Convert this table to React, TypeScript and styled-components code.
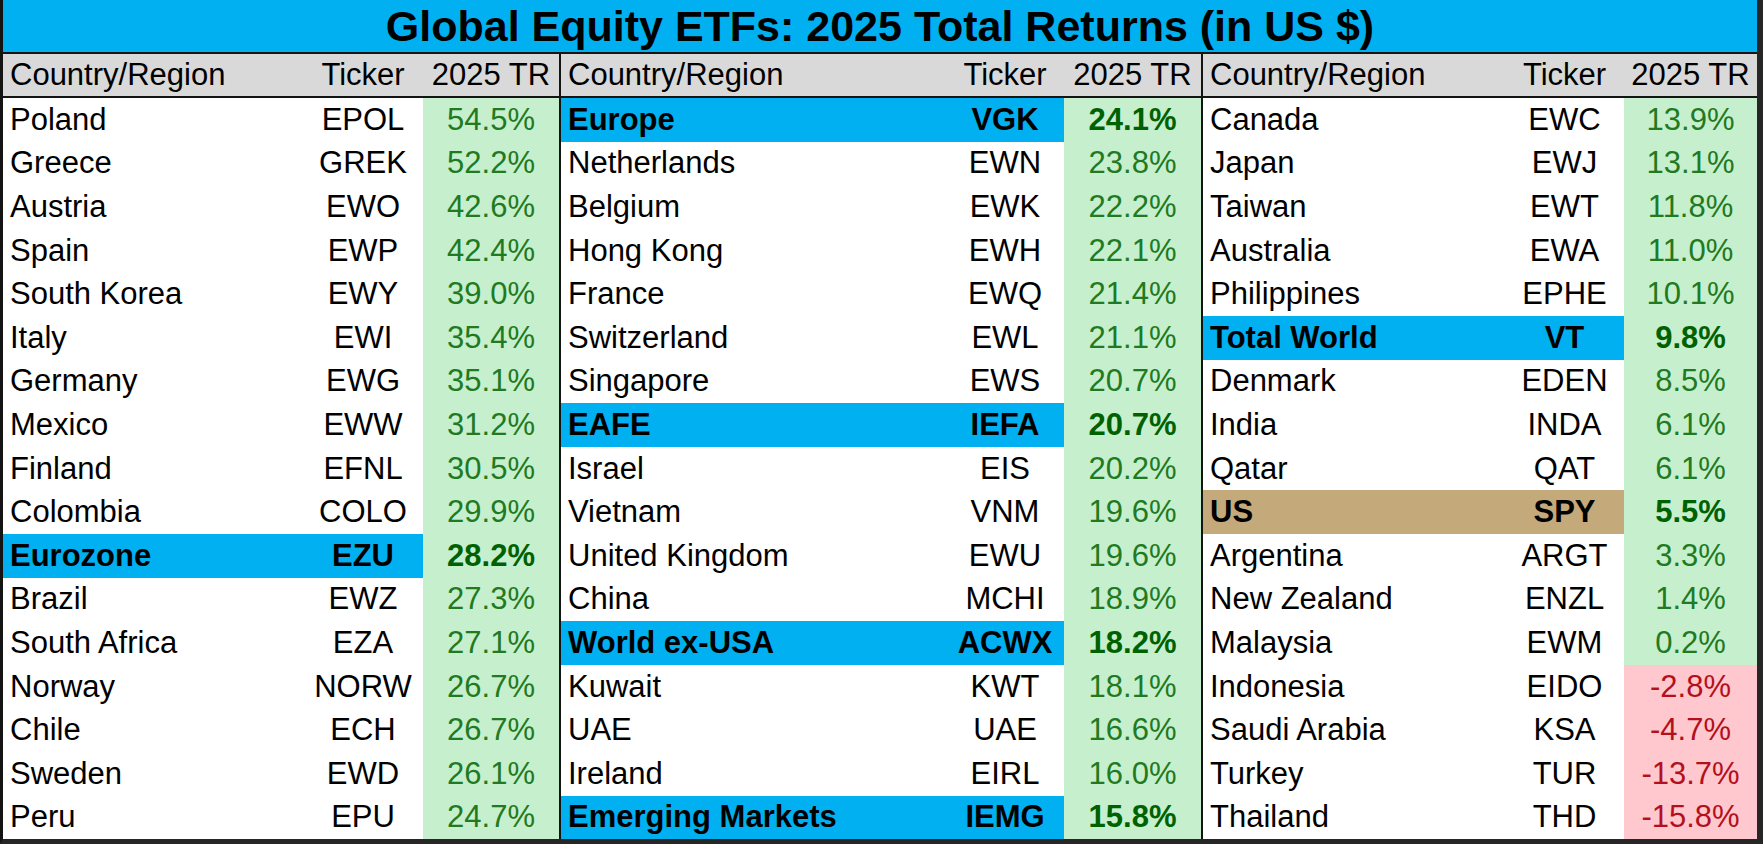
import React from "react"
import styled, { createGlobalStyle } from "styled-components"

type Kind = "plain" | "blue" | "tan"

type EtfRow = {
  name: string
  ticker: string
  tr: number
  kind?: Kind
}

type SectionDef = {
  cols: string
  width: number
  rows: EtfRow[]
}

const GlobalStyle = createGlobalStyle`
  html, body {
    margin: 0;
    padding: 0;
    background: #ffffff;
  }
`

const Sheet = styled.div`
  width: 1763px;
  height: 844px;
  box-sizing: border-box;
  border-left: 3px solid #141414;
  border-right: 6px solid #262626;
  border-bottom: 5px solid #262626;
  display: flex;
  flex-direction: column;
  font-family: "Liberation Sans", Arial, sans-serif;
  color: #000;
  overflow: hidden;
`

const TitleBar = styled.div`
  height: 52px;
  flex: none;
  border-bottom: 2px solid #141414;
  background: #00b0f0;
  display: flex;
  align-items: center;
  justify-content: center;
  font-size: 43px;
  font-weight: 700;
  white-space: nowrap;
`

const Columns = styled.div`
  flex: 1;
  display: flex;
  min-height: 0;
`

const Section = styled.div<{ $width: number; $first?: boolean }>`
  width: ${(p) => p.$width}px;
  flex: none;
  box-sizing: border-box;
  border-left: ${(p) => (p.$first ? "none" : "2px solid #141414")};
  display: flex;
  flex-direction: column;
`

const HeaderRow = styled.div<{ $cols: string }>`
  display: grid;
  grid-template-columns: ${(p) => p.$cols};
  height: 42px;
  flex: none;
  border-bottom: 2px solid #141414;
  background: #d9d9d9;
  font-size: 31px;
  align-items: center;
  white-space: nowrap;
`

const Row = styled.div<{ $cols: string }>`
  display: grid;
  grid-template-columns: ${(p) => p.$cols};
  flex: 1;
  font-size: 31px;
  white-space: nowrap;
`

const bandColor = (kind?: Kind) =>
  kind === "blue" ? "#00b0f0" : kind === "tan" ? "#c4a97b" : "transparent"

const NameCell = styled.div<{ $kind?: Kind }>`
  display: flex;
  align-items: center;
  padding-left: 7px;
  background: ${(p) => bandColor(p.$kind)};
  font-weight: ${(p) => (p.$kind && p.$kind !== "plain" ? 700 : 400)};
  overflow: hidden;
`

const TickerCell = styled.div<{ $kind?: Kind }>`
  display: flex;
  align-items: center;
  justify-content: center;
  background: ${(p) => bandColor(p.$kind)};
  font-weight: ${(p) => (p.$kind && p.$kind !== "plain" ? 700 : 400)};
`

const ReturnCell = styled.div<{ $neg: boolean; $bold?: boolean }>`
  display: flex;
  align-items: center;
  justify-content: center;
  background: ${(p) => (p.$neg ? "#ffc7ce" : "#c6efce")};
  color: ${(p) => (p.$neg ? "#b3101c" : p.$bold ? "#006100" : "#217a21")};
  font-weight: ${(p) => (p.$bold ? 700 : 400)};
`

const HeadCell = styled.div<{ $center?: boolean }>`
  padding-left: ${(p) => (p.$center ? "0" : "7px")};
  text-align: ${(p) => (p.$center ? "center" : "left")};
`

const sections: SectionDef[] = [
  {
    cols: "300px 120px 136px",
    width: 556,
    rows: [
      { name: "Poland", ticker: "EPOL", tr: 54.5 },
      { name: "Greece", ticker: "GREK", tr: 52.2 },
      { name: "Austria", ticker: "EWO", tr: 42.6 },
      { name: "Spain", ticker: "EWP", tr: 42.4 },
      { name: "South Korea", ticker: "EWY", tr: 39.0 },
      { name: "Italy", ticker: "EWI", tr: 35.4 },
      { name: "Germany", ticker: "EWG", tr: 35.1 },
      { name: "Mexico", ticker: "EWW", tr: 31.2 },
      { name: "Finland", ticker: "EFNL", tr: 30.5 },
      { name: "Colombia", ticker: "COLO", tr: 29.9 },
      { name: "Eurozone", ticker: "EZU", tr: 28.2, kind: "blue" },
      { name: "Brazil", ticker: "EWZ", tr: 27.3 },
      { name: "South Africa", ticker: "EZA", tr: 27.1 },
      { name: "Norway", ticker: "NORW", tr: 26.7 },
      { name: "Chile", ticker: "ECH", tr: 26.7 },
      { name: "Sweden", ticker: "EWD", tr: 26.1 },
      { name: "Peru", ticker: "EPU", tr: 24.7 },
    ],
  },
  {
    cols: "385px 118px 137px",
    width: 642,
    rows: [
      { name: "Europe", ticker: "VGK", tr: 24.1, kind: "blue" },
      { name: "Netherlands", ticker: "EWN", tr: 23.8 },
      { name: "Belgium", ticker: "EWK", tr: 22.2 },
      { name: "Hong Kong", ticker: "EWH", tr: 22.1 },
      { name: "France", ticker: "EWQ", tr: 21.4 },
      { name: "Switzerland", ticker: "EWL", tr: 21.1 },
      { name: "Singapore", ticker: "EWS", tr: 20.7 },
      { name: "EAFE", ticker: "IEFA", tr: 20.7, kind: "blue" },
      { name: "Israel", ticker: "EIS", tr: 20.2 },
      { name: "Vietnam", ticker: "VNM", tr: 19.6 },
      { name: "United Kingdom", ticker: "EWU", tr: 19.6 },
      { name: "China", ticker: "MCHI", tr: 18.9 },
      { name: "World ex-USA", ticker: "ACWX", tr: 18.2, kind: "blue" },
      { name: "Kuwait", ticker: "KWT", tr: 18.1 },
      { name: "UAE", ticker: "UAE", tr: 16.6 },
      { name: "Ireland", ticker: "EIRL", tr: 16.0 },
      { name: "Emerging Markets", ticker: "IEMG", tr: 15.8, kind: "blue" },
    ],
  },
  {
    cols: "302px 119px 133px",
    width: 556,
    rows: [
      { name: "Canada", ticker: "EWC", tr: 13.9 },
      { name: "Japan", ticker: "EWJ", tr: 13.1 },
      { name: "Taiwan", ticker: "EWT", tr: 11.8 },
      { name: "Australia", ticker: "EWA", tr: 11.0 },
      { name: "Philippines", ticker: "EPHE", tr: 10.1 },
      { name: "Total World", ticker: "VT", tr: 9.8, kind: "blue" },
      { name: "Denmark", ticker: "EDEN", tr: 8.5 },
      { name: "India", ticker: "INDA", tr: 6.1 },
      { name: "Qatar", ticker: "QAT", tr: 6.1 },
      { name: "US", ticker: "SPY", tr: 5.5, kind: "tan" },
      { name: "Argentina", ticker: "ARGT", tr: 3.3 },
      { name: "New Zealand", ticker: "ENZL", tr: 1.4 },
      { name: "Malaysia", ticker: "EWM", tr: 0.2 },
      { name: "Indonesia", ticker: "EIDO", tr: -2.8 },
      { name: "Saudi Arabia", ticker: "KSA", tr: -4.7 },
      { name: "Turkey", ticker: "TUR", tr: -13.7 },
      { name: "Thailand", ticker: "THD", tr: -15.8 },
    ],
  },
]

const EtfSection = ({ def, first }: { def: SectionDef; first?: boolean }) => (
  <Section $width={def.width} $first={first}>
    <HeaderRow $cols={def.cols}>
      <HeadCell>Country/Region</HeadCell>
      <HeadCell $center>Ticker</HeadCell>
      <HeadCell $center>2025 TR</HeadCell>
    </HeaderRow>
    {def.rows.map((r) => {
      const bold = !!r.kind && r.kind !== "plain"
      return (
        <Row key={r.ticker} $cols={def.cols}>
          <NameCell $kind={r.kind}>{r.name}</NameCell>
          <TickerCell $kind={r.kind}>{r.ticker}</TickerCell>
          <ReturnCell $neg={r.tr < 0} $bold={bold}>
            {r.tr.toFixed(1)}%
          </ReturnCell>
        </Row>
      )
    })}
  </Section>
)

export default function App() {
  return (
    <>
      <GlobalStyle />
      <Sheet>
        <TitleBar>Global Equity ETFs: 2025 Total Returns (in US $)</TitleBar>
        <Columns>
          {sections.map((s, i) => (
            <EtfSection key={i} def={s} first={i === 0} />
          ))}
        </Columns>
      </Sheet>
    </>
  )
}
